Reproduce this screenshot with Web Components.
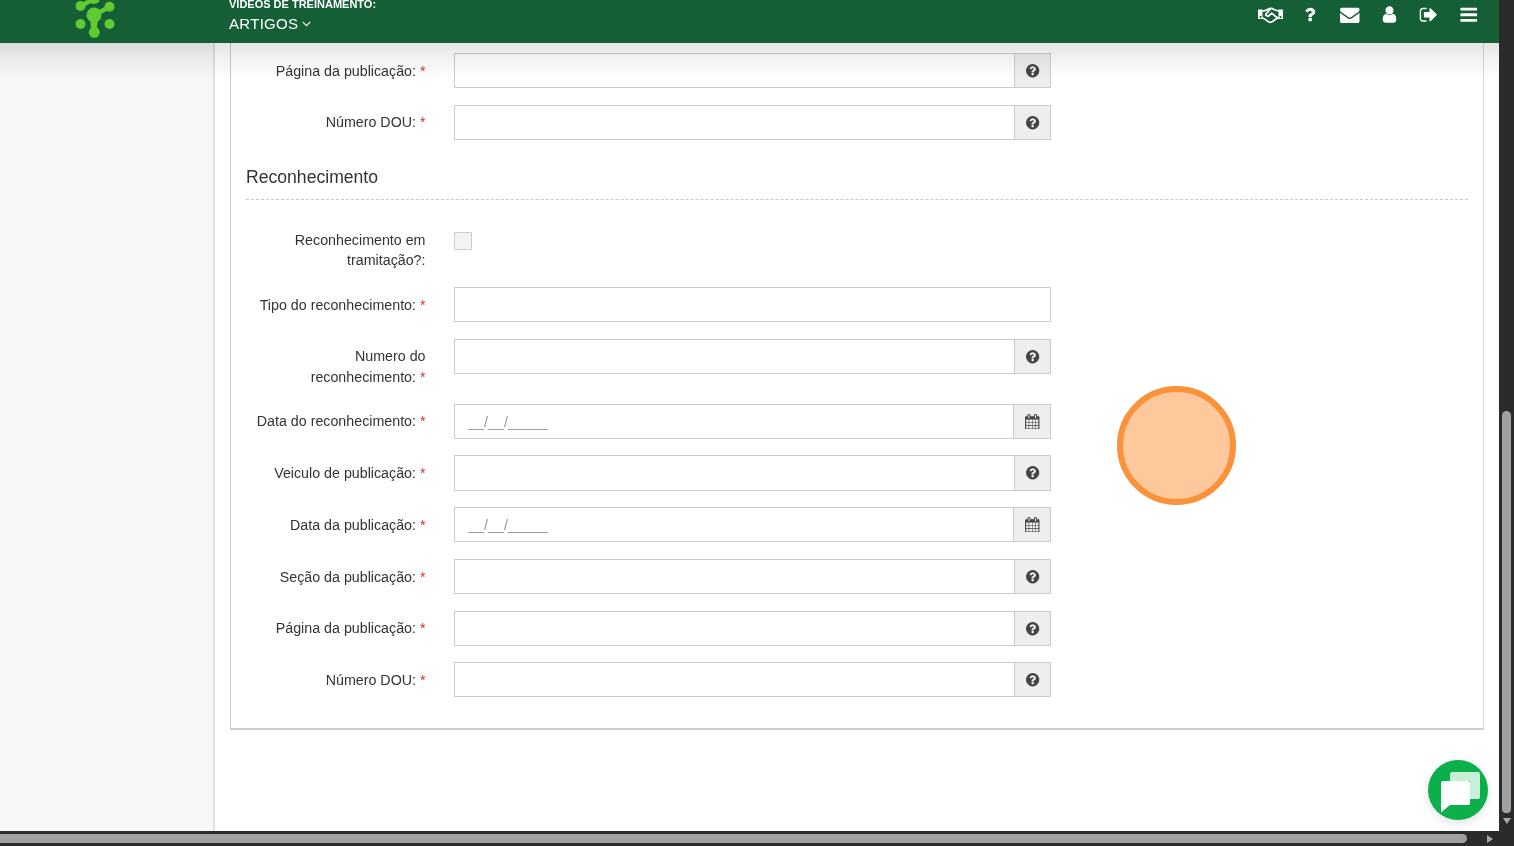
<!DOCTYPE html>
<html lang="pt-BR"><head><meta charset="utf-8"><title>Artigos</title>
<style>html,body{margin:0;padding:0;height:100%;overflow:hidden;background:#fff;font-family:"Liberation Sans",Arial,sans-serif}</style>
</head><body>
<template id="fa"><style>:host{display:inline-flex;align-items:center;justify-content:center}svg{display:block;width:100%;height:100%;fill:currentColor}</style><svg viewBox="0 0 1792 1792"><path></path></svg></template>

<app-shell>
  <app-header slot="header"></app-header>
  <app-sidebar slot="sidebar"></app-sidebar>
  <form-panel slot="main">
    <form-row label="Página da publicação:" required addon="help" low></form-row>
    <form-row label="Número DOU:" required addon="help" style="margin-top:17px"></form-row>
    <section-title style="margin-top:17px">Reconhecimento</section-title>
    <check-row label="Reconhecimento em tramitação?:" style="margin-top:32px"></check-row>
    <form-row label="Tipo do reconhecimento:" required low style="margin-top:15px"></form-row>
    <form-row label="Numero do reconhecimento:" required addon="help" style="margin-top:17px"></form-row>
    <form-row label="Data do reconhecimento:" required addon="cal" mask style="margin-top:16px"></form-row>
    <form-row label="Veiculo de publicação:" required addon="help" tall low style="margin-top:16px"></form-row>
    <form-row label="Data da publicação:" required addon="cal" mask low style="margin-top:16px"></form-row>
    <form-row label="Seção da publicação:" required addon="help" low style="margin-top:17px"></form-row>
    <form-row label="Página da publicação:" required addon="help" style="margin-top:17px"></form-row>
    <form-row label="Número DOU:" required addon="help" low style="margin-top:16px"></form-row>
  </form-panel>
</app-shell>

<script>
const P={
help:"M896 1376v-192q0-14-9-23t-23-9h-192q-14 0-23 9t-9 23v192q0 14 9 23t23 9h192q14 0 23-9t9-23zm256-672q0-88-55.5-163t-138.5-116-170-41q-243 0-371 213-15 24 8 42l132 100q7 6 19 6 16 0 25-12 53-68 86-92 34-24 86-24 48 0 85.5 26t37.5 59q0 38-20 61t-68 45q-63 28-115.5 86.5t-52.5 125.5v36q0 14 9 23t23 9h192q14 0 23-9t9-23q0-19 21.5-49.5t54.5-49.5q32-18 49-28.5t46-35 44.5-48 28-60.5 12.5-81zm384 192q0 209-103 385.5t-279.5 279.5-385.5 103-385.5-103-279.5-279.5-103-385.5 103-385.5 279.5-279.5 385.5-103 385.5 103 279.5 279.5 103 385.5z",
cal:"M192 1664h288v-288h-288v288zm352 0h320v-288h-320v288zm-352-352h288v-320h-288v320zm352 0h320v-320h-320v320zm-352-384h288v-288h-288v288zm736 736h320v-288h-320v288zm-384-736h320v-288h-320v288zm768 736h288v-288h-288v288zm-384-352h320v-320h-320v320zm-352-864v-288q0-13-9.5-22.5t-22.5-9.5h-64q-13 0-22.5 9.5t-9.5 22.5v288q0 13 9.5 22.5t22.5 9.5h64q13 0 22.5-9.5t9.5-22.5zm736 864h288v-320h-288v320zm-384-384h320v-288h-320v288zm384 0h288v-288h-288v288zm32-480v-288q0-13-9.5-22.5t-22.5-9.5h-64q-13 0-22.5 9.5t-9.5 22.5v288q0 13 9.5 22.5t22.5 9.5h64q13 0 22.5-9.5t9.5-22.5zm384-64v1280q0 52-38 90t-90 38h-1408q-52 0-90-38t-38-90v-1280q0-52 38-90t90-38h128v-96q0-66 47-113t113-47h64q66 0 113 47t47 113v96h384v-96q0-66 47-113t113-47h64q66 0 113 47t47 113v96h128q52 0 90 38t38 90z",
question:"M1088 1256v240q0 16-12 28t-28 12h-240q-16 0-28-12t-12-28v-240q0-16 12-28t28-12h240q16 0 28 12t12 28zm316-600q0 54-15.5 101t-35 76.5-55 59.5-57.5 43.5-61 35.5q-41 23-68.5 65t-27.5 67q0 17-12 32.5t-28 15.5h-240q-15 0-25.5-18.5t-10.5-37.5v-45q0-83 65-156.5t143-108.5q59-27 84-56t25-76q0-42-46.5-74t-107.5-32q-65 0-108 29-35 25-107 115-13 16-31 16-12 0-25-8l-164-125q-13-10-15.5-25t5.5-28q160-266 464-266 80 0 161 31t146 83 106 127.5 41 158.5z",
mail:"M1792 710v794q0 66-47 113t-113 47h-1472q-66 0-113-47t-47-113v-794q44 49 101 87 362 246 497 345 57 42 92.5 65.5t94.5 48 110 24.5h2q51 0 110-24.5t94.5-48 92.5-65.5q170-123 498-345 57-39 100-87zm0-294q0 79-49 151t-122 123q-376 261-468 325-10 7-42.5 30.5t-54 38-52 32.5-57.5 27-50 9h-2q-23 0-50-9t-57.5-27-52-32.5-54-38-42.5-30.5q-91-64-262-182.5t-205-142.5q-62-42-117-115.5t-55-136.5q0-78 41.5-130t118.5-52h1472q65 0 112.5 47t47.5 113z",
user:"M1536 1399q0 109-62.5 187t-150.5 78h-854q-88 0-150.5-78t-62.5-187q0-85 8.5-160.5t31.5-152 58.5-131 94-89 134.5-34.5q131 128 313 128t313-128q76 0 134.5 34.5t94 89 58.5 131 31.5 152 8.5 160.5zm-256-887q0 159-112.5 271.5t-271.5 112.5-271.5-112.5-112.5-271.5 112.5-271.5 271.5-112.5 271.5 112.5 112.5 271.5z",
out:"M704 1440q0 4 1 20t.5 26.5-3 23.5-10 19.5-20.5 6.5h-320q-119 0-203.5-84.5t-84.5-203.5v-704q0-119 84.5-203.5t203.5-84.5h320q13 0 22.5 9.5t9.5 22.5q0 4 1 20t.5 26.5-3 23.5-10 19.5-20.5 6.5h-320q-66 0-113 47t-47 113v704q0 66 47 113t113 47h312l11.5 1 11.5 3 8 5.5 7 9 2 13.5zm928-544q0 26-19 45l-544 544q-19 19-45 19t-45-19-19-45v-288h-448q-26 0-45-19t-19-45v-384q0-26 19-45t45-19h448v-288q0-26 19-45t45-19 45 19l544 544q19 19 19 45z",
bars:"M1664 1344v128q0 26-19 45t-45 19h-1408q-26 0-45-19t-19-45v-128q0-26 19-45t45-19h1408q26 0 45 19t19 45zm0-512v128q0 26-19 45t-45 19h-1408q-26 0-45-19t-19-45v-128q0-26 19-45t45-19h1408q26 0 45 19t19 45zm0-512v128q0 26-19 45t-45 19h-1408q-26 0-45-19t-19-45v-128q0-26 19-45t45-19h1408q26 0 45 19t19 45z"
};
class Base extends HTMLElement{
  mount(html){this.attachShadow({mode:"open"}).innerHTML=html}
}
customElements.define("fa-icon",class extends Base{connectedCallback(){
  if(this.shadowRoot)return;
  this.attachShadow({mode:"open"}).appendChild(document.getElementById("fa").content.cloneNode(true));
  this.shadowRoot.querySelector("path").setAttribute("d",P[this.getAttribute("name")]);
}});
customElements.define("app-shell",class extends Base{connectedCallback(){this.mount(`<style>
:host{display:grid;grid-template-columns:1499px 15px;grid-template-rows:831px 15px;width:1514px;height:846px;position:relative;overflow:hidden}
.page{display:grid;grid-template-columns:215px 1fr;grid-template-rows:43px 1fr;min-width:0;min-height:0;position:relative;overflow:hidden;background:#fff}
.head{grid-column:1/3;z-index:2}
.shade{position:absolute;left:0;right:0;top:43px;height:36px;background:linear-gradient(#e4e4e4,#f1f1f1 40%,#fff);mix-blend-mode:multiply;z-index:1;pointer-events:none}
.vbar{background:#2b2b2b;display:flex;flex-direction:column;align-items:center}
.vthumb{width:9px;height:402px;margin-top:411px;background:#a0a0a0;border-radius:4.5px 4.5px 4px 4px}
.varrow{width:0;height:0;border:4.5px solid transparent;border-top:6px solid #a8a8a8;border-bottom:0;margin-top:5px}
.hbar{grid-column:1/3;background:#2b2b2b;display:flex;align-items:center}
.hthumb{width:1467px;height:9px;background:#a0a0a0;border-radius:0 4.5px 4.5px 0}
.harrow{width:0;height:0;border:4.5px solid transparent;border-left:6px solid #a8a8a8;border-right:0;margin-left:20px}
.spot{position:absolute;left:1117px;top:386px;width:119px;height:119px;box-sizing:border-box;border-radius:50%;border:6px solid #f9923b;background:#fdc89b;z-index:5}
.chat{position:absolute;left:1428px;top:760px;width:60px;height:60px;border-radius:50%;background:#0cb04a;box-shadow:0 3px 10px rgba(0,0,0,.12);z-index:5}
.chat svg{display:block;width:60px;height:60px}
</style>
<div class="page"><div class="head"><slot name="header"></slot></div><slot name="sidebar"></slot><slot name="main"></slot><div class="shade"></div></div>
<div class="vbar"><div class="vthumb"></div><div class="varrow"></div></div>
<div class="hbar"><div class="hthumb"></div><div class="harrow"></div></div>
<div class="spot"></div>
<div class="chat"><svg viewBox="0 0 60 60"><path fill="#c8efd7" d="M24 12h26a2 2 0 0 1 2 2v23a2 2 0 0 1-2 2h-8V21H22v-7a2 2 0 0 1 2-2z"/><path fill="#fff" d="M15 21h25a2 2 0 0 1 2 2v20a2 2 0 0 1-2 2H22l-9 7.500V23a2 2 0 0 1 2-2z"/></svg></div>`)}});
customElements.define("app-header",class extends Base{connectedCallback(){this.mount(`<style>
:host{display:flex;height:43px;background:#155f36;color:#fff;overflow:hidden;font-family:"Liberation Sans",Arial,sans-serif}
.logo{width:215px;flex:none;padding-left:70px;box-sizing:border-box}
.logo svg{display:block;width:50px;height:43px}
.title{margin-left:14px;display:flex;flex-direction:column;justify-content:flex-end;height:43px;padding-bottom:11px;box-sizing:border-box;white-space:nowrap}
.t1{font-size:11px;font-weight:700;line-height:14px;margin-bottom:4px}
.t2{font-size:15px;line-height:17px;display:flex;align-items:center;gap:4px;letter-spacing:.3px}
.t2 svg{width:9px;height:6px;margin-top:1px}
.icons{margin-left:auto;display:flex;align-items:center;height:29px;padding-right:10.750px;color:#fff}
.slot{width:39.500px;display:flex;justify-content:center;align-items:center}
.hand{display:block;width:26px;height:20px;transform:translateX(-.5px)}
.q{transform:translateX(-.7px)}
</style>
<div class="logo"><svg viewBox="0 0 50 43"><g fill="#5ecb33" stroke="none"><path d="M10.500 6 24 -1M24 15 39.500 7" stroke="#5ecb33" stroke-width="4.500" fill="none"/><path d="M20 18h8l-1 10h-6z"/><circle cx="24" cy="-2" r="6"/><circle cx="10.500" cy="6" r="5"/><circle cx="39.500" cy="6.700" r="5"/><circle cx="24" cy="15" r="7.500"/><circle cx="10.500" cy="24" r="5"/><circle cx="39.500" cy="24" r="5"/><circle cx="24.300" cy="32.300" r="5.500"/></g></svg></div>
<div class="title"><div class="t1">VÍDEOS DE TREINAMENTO:</div><div class="t2">ARTIGOS <svg viewBox="0 0 9 6"><path d="M.7.8 4.500 4.600 8.300.8" fill="none" stroke="#fff" stroke-width="1.100"/></svg></div></div>
<div class="icons">
<span class="slot"><svg class="hand" viewBox="0 0 26 20"><path fill="#fff" fill-rule="evenodd" d="M.5 4.500H5v9.500H.5zM3 11a1 1 0 1 0 .01 0zM21 4.500h4.500V14H21zM23 11a1 1 0 1 0 .01 0z"/><path fill="none" stroke="#fff" stroke-width="1.700" stroke-linejoin="round" stroke-linecap="round" d="M5 6c2.500 0 3.500-.5 5-1.500 1.500-1 3-1.500 4.500-1s2.500 1.500 6.500 2.500M5 13c2 .5 3 1.500 5 3.200 1.700 1.400 3.500 1.300 5 .3l5.500-4"/><path fill="none" stroke="#fff" stroke-width="1.700" stroke-linejoin="round" stroke-linecap="round" d="M12.500 4.500 8.500 9c-.8 1.500 1.500 2.700 3 1.700l2.700-2.500 6.300 5.300"/></svg></span>
<span class="slot"><fa-icon class="q" name="question" style="width:19px;height:19px"></fa-icon></span>
<span class="slot"><fa-icon name="mail" style="width:19.500px;height:19.500px"></fa-icon></span>
<span class="slot"><fa-icon name="user" style="width:19px;height:19px"></fa-icon></span>
<span class="slot"><fa-icon name="out" style="width:19.500px;height:19.500px"></fa-icon></span>
<span class="slot"><fa-icon name="bars" style="width:19.500px;height:19.500px"></fa-icon></span></div>`)}});
customElements.define("app-sidebar",class extends Base{connectedCallback(){this.mount(`<style>:host{display:block;background:#f7f7f7;border-right:2px solid #e1e1e1;box-sizing:border-box}</style>`)}});
customElements.define("form-panel",class extends Base{connectedCallback(){this.mount(`<style>
:host{display:block;padding-right:15px;box-sizing:border-box;font-family:"Liberation Sans",Arial,sans-serif;color:#333;font-size:14px}
.box{margin-left:15px;height:687px;box-sizing:border-box;border-left:1px solid #c9c9c9;border-right:1px solid #d8d8d8;border-bottom:2px solid #cfcfcf;padding:10px 15px 0}
</style><div class="box"><slot></slot></div>`)}});
customElements.define("section-title",class extends Base{connectedCallback(){this.mount(`<style>
:host{display:block;height:43px;box-sizing:border-box;border-bottom:1px dashed #c9c9c9;font-size:17.600px;color:#333;padding-top:7px}
div{line-height:26px}
</style><div><slot></slot></div>`)}});
const ROW=`:host{display:grid;grid-template-columns:169.500px 597px;padding-left:10px;column-gap:28.500px;align-items:start;font-family:"Liberation Sans",Arial,sans-serif}
.lab{font-size:14.250px;line-height:21px;text-align:right;color:#333}`;
customElements.define("form-row",class extends Base{connectedCallback(){
  const a=this.getAttribute("addon"),lab=this.getAttribute("label"),req=this.hasAttribute("required"),mask=this.hasAttribute("mask"),tall=this.hasAttribute("tall"),low=this.hasAttribute("low");
  const add=a?`<span class="add ${a}"><fa-icon name="${a}"></fa-icon></span>`:"";
  this.mount(`<style>${ROW}
.lab{padding-top:${low?8:7}px}
.req{color:#c9302c}
.grp{display:flex;height:${tall?36:35}px;box-sizing:border-box}
.inp{flex:1;min-width:0;border:1px solid #ccc;background:#fff;box-sizing:border-box;padding:0 13px;display:flex;align-items:center;color:#999;font-size:14.350px}
.add{width:36px;flex:none;border:1px solid #ccc;border-left:0;background:#eee;display:flex;align-items:center;justify-content:center;color:#444;box-sizing:border-box}
.add.cal{width:37px}
fa-icon{width:15.500px;height:15.500px}
.help fa-icon{transform:translateX(1px)}
.cal fa-icon{transform:translateX(.5px)}
</style><div class="lab">${lab}${req?' <span class="req">*</span>':''}</div>
<div class="grp"><div class="inp">${mask?'__/__/_____':''}</div>${add}</div>`)}});
customElements.define("check-row",class extends Base{connectedCallback(){this.mount(`<style>${ROW}
:host{height:40px}
.lab{margin-top:-2px;line-height:20px}
.box{width:18px;height:18px;box-sizing:border-box;border:1px solid #ccc;background:#f3f3f3;border-radius:1px}
</style><div class="lab">${this.getAttribute("label")}</div><div><div class="box"></div></div>`)}});
</script>
</body></html>
